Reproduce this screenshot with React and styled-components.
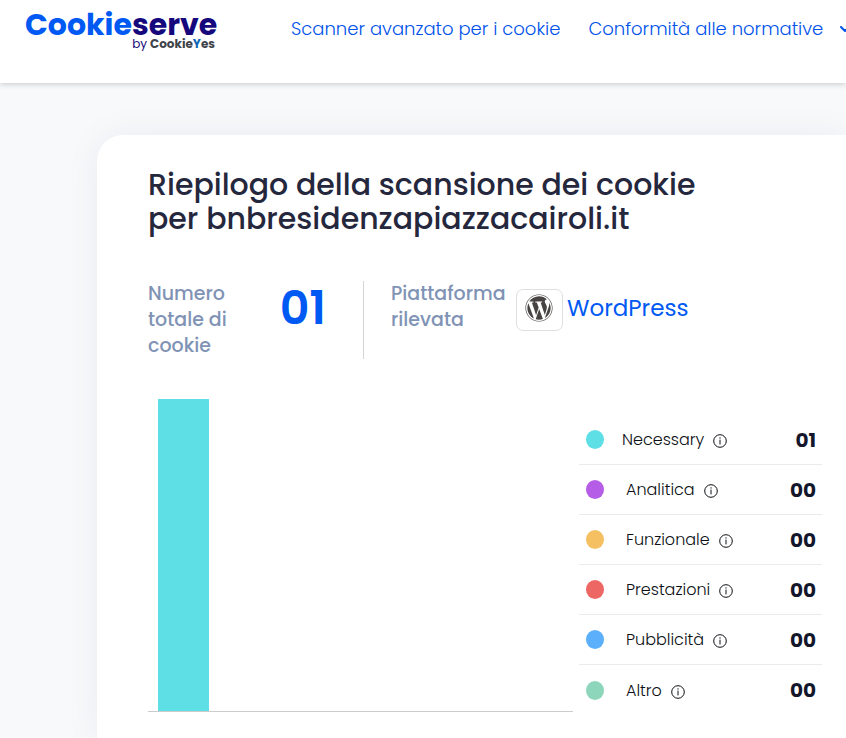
import React from "react";
import styled, { createGlobalStyle } from "styled-components";
import { FaWordpress } from "react-icons/fa";
import { FiChevronDown } from "react-icons/fi";

const GlobalStyle = createGlobalStyle`
  * {
    box-sizing: border-box;
  }

  body {
    margin: 0;
    overflow-x: hidden;
    background: #f8f9fb;
    color: #25273d;
    font-family: Poppins, Inter, sans-serif;
    font-feature-settings: "cv11";
  }
`;

const Page = styled.div`
  display: flex;
  flex-direction: column;
  min-height: 100vh;
  overflow: hidden;
`;

const Header = styled.header`
  display: flex;
  align-items: flex-start;
  height: 83px;
  padding: 12px 0 0 25px;
  background: #fff;
  box-shadow: 0 1px 6px rgba(0, 0, 0, 0.2);
`;

const Logo = styled.a`
  display: flex;
  flex-direction: column;
  flex: none;
  width: 190px;
  margin-right: 76px;
  color: #15077c;
  text-decoration: none;
`;

const LogoName = styled.span`
  font-size: 30px;
  font-weight: 700;
  line-height: 26px;
`;

const LogoBlue = styled.span`
  color: #0059f2;
`;

const LogoBy = styled.span`
  display: flex;
  justify-content: flex-end;
  gap: 3px;
  font-size: 12px;
  line-height: 12px;
`;

const LogoBrand = styled.span`
  color: #40434a;
  font-weight: 700;
`;

const LogoCheck = styled.span`
  color: #0c64b4;
`;

const Nav = styled.nav`
  display: flex;
  flex: none;
  gap: 28px;
  padding-top: 4px;
`;

const NavLink = styled.a`
  display: flex;
  align-items: center;
  gap: 14px;
  color: #0052ea;
  font-size: 18px;
  font-weight: 300;
  line-height: 26px;
  text-decoration: none;
  white-space: nowrap;
`;

const Main = styled.main`
  display: flex;
  flex: 1;
  padding: 52px 0 0 97px;
`;

const Card = styled.section`
  flex: 1;
  padding: 33px 24px 26px 51px;
  border-radius: 26px 0 0 0;
  background: #fff;
  box-shadow: 0 0 36px rgba(30, 40, 60, 0.06);
`;

const Title = styled.h1`
  margin: 0;
  font-size: 30px;
  font-weight: 500;
  line-height: 34px;
`;

const Stats = styled.div`
  display: flex;
  margin-top: 45px;
`;

const Total = styled.div`
  display: flex;
  justify-content: space-between;
  width: 216px;
  padding-right: 37px;
  border-right: 1px solid #d5d5d5;
`;

const StatLabel = styled.span`
  width: ${(props) => props.$width};
  color: #8093b5;
  font-size: 19px;
  font-weight: 500;
  line-height: 26px;
`;

const TotalValue = styled.strong`
  color: #0059f2;
  font-size: 46px;
  font-weight: 600;
  line-height: 54px;
`;

const Platform = styled.div`
  display: flex;
  align-items: flex-start;
  padding-left: 27px;
`;

const PlatformLogo = styled.span`
  display: flex;
  width: 47px;
  height: 42px;
  margin: 8px 4px 0 0;
  padding: 4px 0 0 8px;
  border: 1px solid #dfdfdf;
  border-radius: 7px;
  color: #464342;
`;

const PlatformName = styled.span`
  color: #0059f2;
  font-size: 23px;
  font-weight: 400;
  line-height: 54px;
`;

const Results = styled.div`
  display: flex;
  gap: 6px;
  margin-top: 40px;
`;

const Chart = styled.div`
  display: grid;
  grid-template-columns: repeat(6, 1fr);
  align-items: end;
  flex: 1;
  height: 313px;
  border-bottom: 1px solid #ccc;
`;

const Bar = styled.div`
  margin: 0 10px;
  background: ${(props) => props.$color};
`;

const Legend = styled.ul`
  width: 243px;
  margin: 0;
  padding: 16px 0 0;
  list-style: none;
`;

const LegendItem = styled.li`
  display: flex;
  align-items: center;
  height: 50px;
  padding: 0 6px 0 7px;
  border-bottom: 1px solid #ebebeb;

  &:last-child {
    border-bottom: 0;
  }
`;

const Dot = styled.span`
  width: 18px;
  height: 19px;
  margin-right: ${(props) => (props.$first ? "18px" : "22px")};
  border-radius: 50%;
  background: ${(props) => props.$color};
`;

const Name = styled.span`
  color: #0c0f14;
  font-size: 16px;
  font-weight: 300;
`;

const InfoButton = styled.button`
  display: flex;
  margin: 3px 0 0 9px;
  padding: 0;
  border: 0;
  background: none;
  color: #0c0f14;
`;

const Count = styled.strong`
  margin-left: auto;
  color: #14172b;
  font-size: 20px;
  font-weight: 700;
`;

const categories = [
  { name: "Necessary", count: 1, color: "#5edee5" },
  { name: "Analitica", count: 0, color: "#b55de6" },
  { name: "Funzionale", count: 0, color: "#f5c062" },
  { name: "Prestazioni", count: 0, color: "#ed6764" },
  { name: "Pubblicità", count: 0, color: "#5caffa" },
  { name: "Altro", count: 0, color: "#8ed6bb" },
];

const max = Math.max(...categories.map((c) => c.count));

const pad = (n) => String(n).padStart(2, "0");

function InfoIcon() {
  return (
    <svg width="14" height="14" viewBox="0 0 14 14" fill="none">
      <circle cx="7" cy="7" r="6.3" stroke="currentColor" strokeWidth="1" />
      <path d="M7 5.6V10.4" stroke="currentColor" strokeWidth="1" />
      <circle cx="7" cy="3.9" r="0.7" fill="currentColor" />
    </svg>
  );
}

function App() {
  return (
    <Page>
      <GlobalStyle />
      <Header>
        <Logo href="#">
          <LogoName>
            <LogoBlue>Cookie</LogoBlue>serve
          </LogoName>
          <LogoBy>
            by
            <LogoBrand>
              Cookie<LogoCheck>Y</LogoCheck>es
            </LogoBrand>
          </LogoBy>
        </Logo>
        <Nav>
          <NavLink href="#">Scanner avanzato per i cookie</NavLink>
          <NavLink href="#">
            Conformità alle normative
            <FiChevronDown size={16} strokeWidth={3} />
          </NavLink>
        </Nav>
      </Header>

      <Main>
        <Card>
          <Title>
            Riepilogo della scansione dei cookie
            <br />
            per bnbresidenzapiazzacairoli.it
          </Title>

          <Stats>
            <Total>
              <StatLabel $width="90px">Numero totale di cookie</StatLabel>
              <TotalValue>{pad(1)}</TotalValue>
            </Total>
            <Platform>
              <StatLabel $width="125px">Piattaforma rilevata</StatLabel>
              <PlatformLogo>
                <FaWordpress size={28} />
              </PlatformLogo>
              <PlatformName>WordPress</PlatformName>
            </Platform>
          </Stats>

          <Results>
            <Chart>
              {categories.map((c) => (
                <Bar
                  key={c.name}
                  $color={c.color}
                  style={{ height: `${(c.count / max) * 312}px` }}
                />
              ))}
            </Chart>
            <Legend>
              {categories.map((c, i) => (
                <LegendItem key={c.name}>
                  <Dot $color={c.color} $first={i === 0} />
                  <Name>{c.name}</Name>
                  <InfoButton type="button" aria-label={`Info ${c.name}`}>
                    <InfoIcon />
                  </InfoButton>
                  <Count>{pad(c.count)}</Count>
                </LegendItem>
              ))}
            </Legend>
          </Results>
        </Card>
      </Main>
    </Page>
  );
}

export default App;
